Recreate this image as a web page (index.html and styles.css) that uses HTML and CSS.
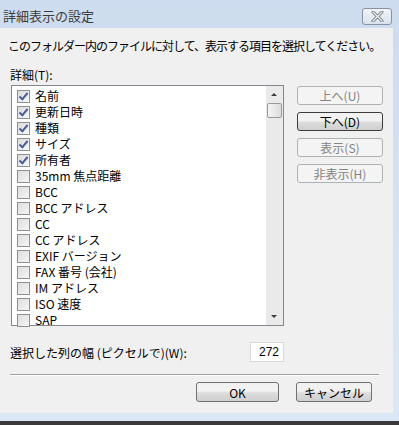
FILE: index.html
```html
<!DOCTYPE html>
<html lang="ja">
<head>
  <meta charset="UTF-8">
  <title>詳細表示の設定</title>
  <link rel="stylesheet" href="styles.css">
</head>
<body>
  <div class="window">
    <div class="titlebar">
      <span class="title">詳細表示の設定</span>
      <button class="close" aria-label="閉じる">
        <svg width="13" height="11" viewBox="0 0 13 11">
          <path d="M2 1 L11 10 M11 1 L2 10" stroke="#6b7480" stroke-width="3" stroke-linecap="round"/>
          <path d="M2 1 L11 10 M11 1 L2 10" stroke="#f4f6f8" stroke-width="1.2" stroke-linecap="round"/>
        </svg>
      </button>
    </div>
    <div class="client">
      <p class="intro">このフォルダー内のファイルに対して、表示する項目を選択してください。</p>
      <p class="label">詳細(T):</p>
      <div class="main">
        <div class="listbox">
          <ul class="items">
            <li><span class="chk on"></span>名前</li>
            <li><span class="chk on"></span>更新日時</li>
            <li><span class="chk on"></span>種類</li>
            <li><span class="chk on"></span>サイズ</li>
            <li><span class="chk on"></span>所有者</li>
            <li><span class="chk"></span>35mm 焦点距離</li>
            <li><span class="chk"></span>BCC</li>
            <li><span class="chk"></span>BCC アドレス</li>
            <li><span class="chk"></span>CC</li>
            <li><span class="chk"></span>CC アドレス</li>
            <li><span class="chk"></span>EXIF バージョン</li>
            <li><span class="chk"></span>FAX 番号 (会社)</li>
            <li><span class="chk"></span>IM アドレス</li>
            <li><span class="chk"></span>ISO 速度</li>
            <li><span class="chk"></span>SAP</li>
          </ul>
          <div class="scrollbar">
            <span class="arrow up"></span>
            <span class="thumb"></span>
            <span class="track"></span>
            <span class="arrow down"></span>
          </div>
        </div>
        <div class="side">
          <button class="btn disabled">上へ(U)</button>
          <button class="btn focus">下へ(D)</button>
          <button class="btn disabled">表示(S)</button>
          <button class="btn disabled">非表示(H)</button>
        </div>
      </div>
      <div class="width-row">
        <span>選択した列の幅 (ピクセルで)(W):</span>
        <input class="num" type="text" value="272">
      </div>
      <hr class="sep">
      <div class="footer">
        <button class="btn ok">OK</button>
        <button class="btn cancel">キャンセル</button>
      </div>
    </div>
    <div class="bottom-edge"></div>
  </div>
</body>
</html>
```

FILE: styles.css
```css
body {
  margin: 0;
  font-family: "Noto Sans CJK JP", "Noto Sans", sans-serif;
  font-size: 12px;
  color: #000;
}

.window {
  width: 399px;
  height: 425px;
  background: linear-gradient(#cddcee, #dce8f5);
  display: flex;
  flex-direction: column;
}

.titlebar {
  height: 28px;
  display: flex;
  align-items: center;
  justify-content: space-between;
  padding: 0 7px 0 3px;
}

.title {
  font-size: 13px;
  color: #3c3c3c;
  margin-top: 2px;
}

.close {
  width: 30px;
  height: 17px;
  margin-top: 4px;
  border: 1px solid #8793a3;
  border-radius: 3px;
  background: linear-gradient(#f2f5f9, #d9e2ec);
  display: flex;
  align-items: center;
  justify-content: center;
  padding: 0;
}

.client {
  width: 393px;
  height: 385px;
  background: #f0f0f0;
  box-sizing: border-box;
  padding: 9px 0 0 10px;
}

.intro {
  margin: 0 0 0 -2px;
  height: 18px;
  line-height: 18px;
  white-space: nowrap;
  letter-spacing: -1px;
}

.label {
  margin: 11px 0 0;
  height: 17px;
  line-height: 17px;
}

.main {
  display: flex;
  gap: 13px;
  margin-top: 2px;
}

.listbox {
  width: 273px;
  height: 241px;
  box-sizing: border-box;
  border: 1px solid #828790;
  background: #fff;
  display: flex;
  margin-left: 1px;
}

.items {
  list-style: none;
  margin: 0;
  padding: 2px 0 0 5px;
  flex: 1;
}

.items li {
  height: 16px;
  line-height: 16px;
  display: flex;
  align-items: center;
  gap: 5px;
}

.chk {
  width: 11px;
  height: 11px;
  border: 1px solid #8f8f8f;
  background: linear-gradient(135deg, #dcdcdc, #f6f6f6);
  position: relative;
  flex: none;
}

.chk.on::after {
  content: "";
  position: absolute;
  left: 3px;
  top: 0;
  width: 3px;
  height: 7px;
  border: solid #4a5f97;
  border-width: 0 2px 2px 0;
  transform: rotate(40deg);
}

.scrollbar {
  width: 17px;
  background: #eaeaea;
  display: flex;
  flex-direction: column;
  align-items: center;
}

.arrow {
  height: 17px;
  width: 17px;
  position: relative;
  flex: none;
}

.arrow::after {
  content: "";
  position: absolute;
  left: 5px;
  border-left: 3px solid transparent;
  border-right: 3px solid transparent;
}

.arrow.up::after {
  top: 7px;
  border-bottom: 3px solid #3c3c3c;
}

.arrow.down::after {
  top: 7px;
  border-top: 3px solid #3c3c3c;
}

.thumb {
  width: 15px;
  height: 15px;
  border: 1px solid #9a9a9a;
  border-radius: 2px;
  background: linear-gradient(90deg, #f4f4f4, #dcdcdc);
  box-sizing: border-box;
  flex: none;
}

.track {
  flex: 1;
}

.side {
  display: flex;
  flex-direction: column;
  gap: 7px;
  padding-top: 1px;
}

.btn {
  font-family: inherit;
  font-size: 12px;
  height: 19px;
  width: 86px;
  padding: 0;
  border: 1px solid #707070;
  border-radius: 3px;
  background: linear-gradient(#f2f2f2 45%, #dddddd 55%, #cfcfcf);
  color: #000;
  line-height: 17px;
}

.btn.disabled {
  border-color: #adb2b5;
  background: #f4f4f4;
  color: #838383;
}

.btn.focus {
  border-color: #3c3c3c;
}

.width-row {
  display: flex;
  align-items: center;
  justify-content: space-between;
  width: 273px;
  margin-top: 16px;
}

.num {
  width: 34px;
  height: 20px;
  box-sizing: border-box;
  border: 1px solid #d8d8d8;
  background: #fff;
  text-align: right;
  font-family: "Liberation Sans", sans-serif;
  font-size: 12px;
  padding: 0 4px 0 0;
  margin-right: -1px;
}

.sep {
  width: 369px;
  margin: 12px 0 0;
  border: 0;
  border-top: 1px solid #a0a0a0;
  border-bottom: 1px solid #fff;
}

.footer {
  display: flex;
  justify-content: flex-end;
  gap: 17px;
  width: 362px;
  margin-top: 6px;
}

.btn.ok {
  width: 83px;
  height: 20px;
}

.btn.cancel {
  width: 76px;
  height: 20px;
}

.bottom-edge {
  flex: 1;
  border-bottom: 4px solid #3a3a3a;
}
```
